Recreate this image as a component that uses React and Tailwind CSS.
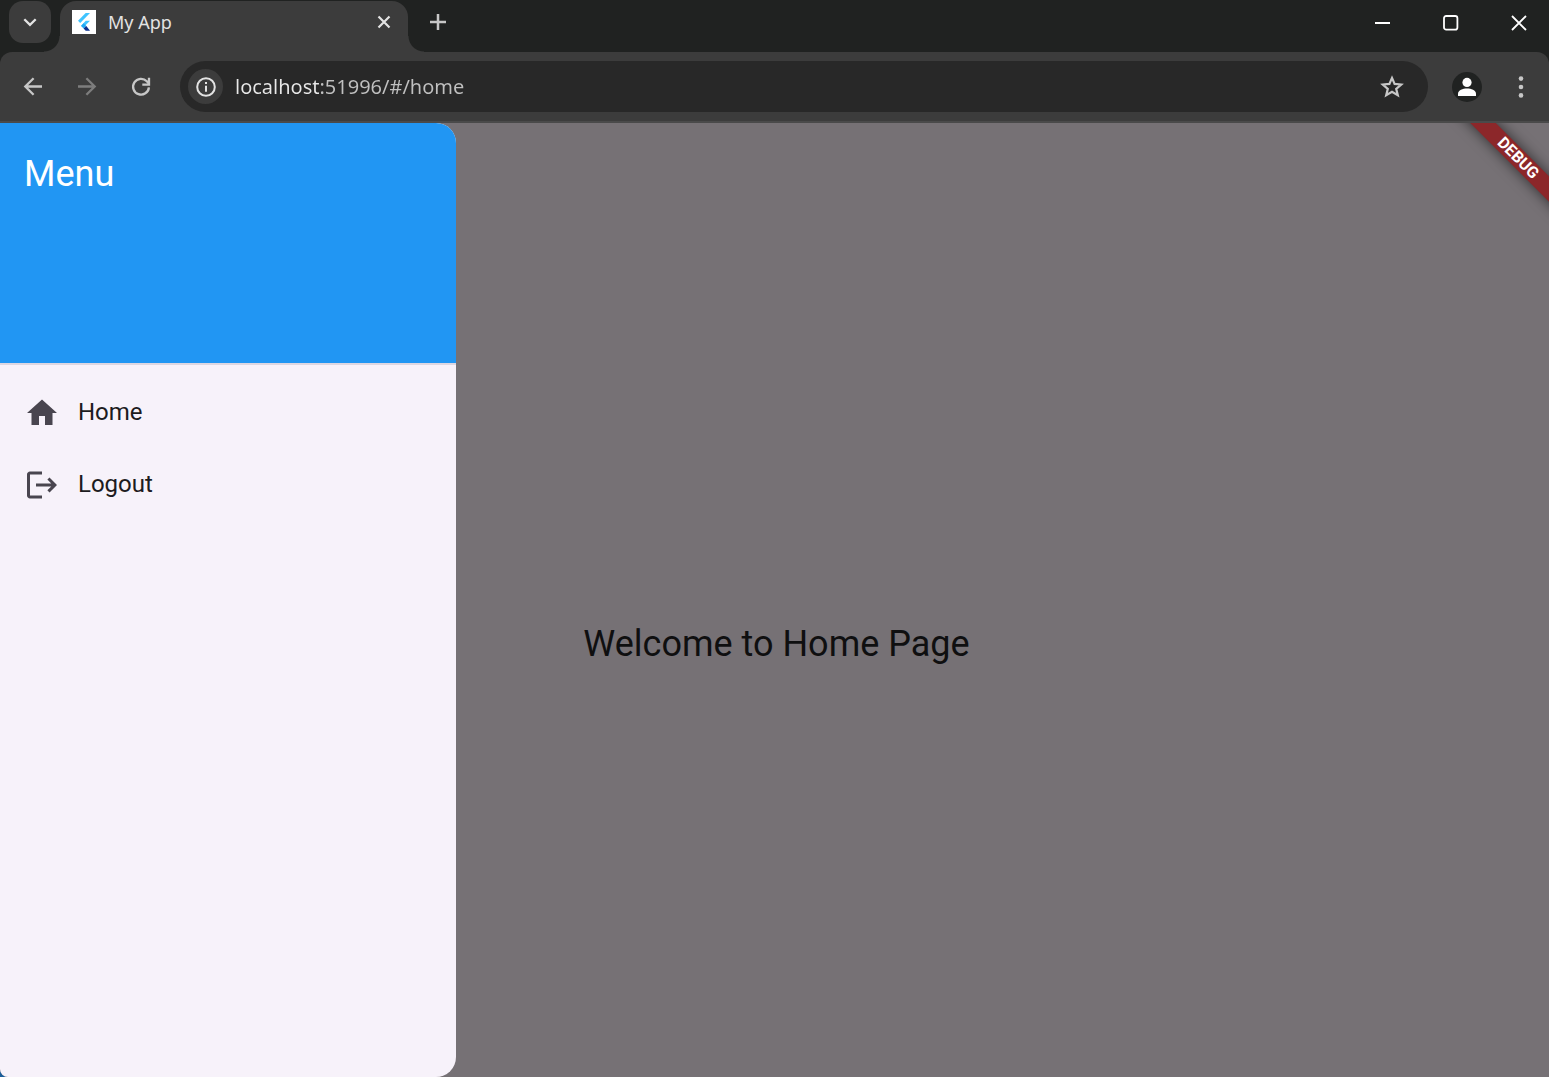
const iconButton = "flex shrink-0 items-center justify-center rounded-full";

function TabStrip() {
  return (
    <header className="flex h-13 items-start bg-[#202221] pl-[9px]">
      <button
        type="button"
        aria-label="Search tabs"
        className="mt-px flex h-[42px] w-[42px] shrink-0 items-center justify-center rounded-[14px] bg-[#3c3c3c]"
      >
        <svg width="16" height="16" viewBox="0 0 16 16" fill="none" stroke="#e3e3e3" strokeWidth="2.3">
          <path d="M2.3 5.2 8 10.8l5.7-5.6" />
        </svg>
      </button>
      <div className="relative mt-px ml-[9px] flex h-[51px] w-[348px] items-center rounded-t-2xl bg-[#3c3c3c] pr-4 pb-[9px] pl-3">
        <span className="absolute bottom-0 -left-4 h-4 w-4 bg-[radial-gradient(circle_at_0_0,transparent_15px,#3c3c3c_16px)]" />
        <span className="absolute -right-4 bottom-0 h-4 w-4 bg-[radial-gradient(circle_at_100%_0,transparent_15px,#3c3c3c_16px)]" />
        <svg width="24" height="24" viewBox="0 0 24 24" className="shrink-0">
          <path fill="#fff" d="M0 0h24v24H0z" />
          <path fill="#40c4ff" d="M13.7 3H18L8.2 13 6 10.8z" />
          <path fill="#40c4ff" d="M13.7 10.8H18L12.8 16 9 16z" />
          <path fill="#1fa8f5" d="m9 16 2.6-2.7 2.7 2.7-2.7 2.6z" />
          <path fill="#0a2f8f" d="m11.6 18.600 2.700-2.600 3.700 4.800h-4.300z" />
        </svg>
        <span className="ml-3 flex-1 font-['Noto_Sans','Open_Sans',sans-serif] text-lg leading-6 text-[#e3e3e3]">
          My App
        </span>
        <button type="button" aria-label="Close tab" className={`${iconButton} h-4 w-4`}>
          <svg width="14" height="14" viewBox="0 0 14 14" stroke="#e3e3e3" strokeWidth="2.2">
            <path d="m1.5 1.5 11 11M12.5 1.5l-11 11" />
          </svg>
        </button>
      </div>
      <button type="button" aria-label="New tab" className={`${iconButton} mt-1.5 ml-3.5 h-8 w-8`}>
        <svg width="16" height="16" viewBox="0 0 16 16" stroke="#c7c7c7" strokeWidth="2.5">
          <path d="M8 0v16M0 8h16" />
        </svg>
      </button>
      <div className="ml-auto flex h-[46px]">
        <button type="button" aria-label="Minimize" className="flex w-[68px] items-center justify-center">
          <svg width="16" height="16" viewBox="0 0 16 16" stroke="#fff" strokeWidth="2">
            <path d="M0 8h15" />
          </svg>
        </button>
        <button type="button" aria-label="Maximize" className="flex w-[68px] items-center justify-center">
          <svg width="16" height="16" viewBox="0 0 16 16" fill="none" stroke="#fff" strokeWidth="1.8">
            <rect x="1" y="1" width="13.4" height="13.6" rx="2.2" />
          </svg>
        </button>
        <button type="button" aria-label="Close window" className="flex w-[64px] items-center justify-center pl-1">
          <svg width="16" height="16" viewBox="0 0 16 16" stroke="#fff" strokeWidth="1.8">
            <path d="m1 1 14 14M15 1 1 15" />
          </svg>
        </button>
      </div>
    </header>
  );
}

function Toolbar() {
  return (
    <div className="bg-[#202221]">
      <div className="flex h-[71px] items-center rounded-t-xl border-b-2 border-[#4a4a4a] bg-[#3c3c3c] pr-[11px] pl-[15px]">
        <nav aria-label="Browser" className="flex gap-[18px]">
          <button type="button" aria-label="Back" className={`${iconButton} h-9 w-9`}>
            <svg width="20" height="20" viewBox="0 0 20 20" fill="none" stroke="#c7c7c7" strokeWidth="2.3">
              <path d="M19 9.500H2.400M10.600 1.200 2.300 9.500l8.300 8.300" />
            </svg>
          </button>
          <button type="button" aria-label="Forward" className={`${iconButton} h-9 w-9`}>
            <svg width="20" height="20" viewBox="0 0 20 20" fill="none" stroke="#7d7d7d" strokeWidth="2.3">
              <path d="M1 9.500h16.600M9.400 1.200l8.300 8.300-8.300 8.300" />
            </svg>
          </button>
          <button type="button" aria-label="Reload" className={`${iconButton} h-9 w-9`}>
            <svg width="20" height="20" viewBox="0 0 20 20" fill="none" stroke="#c7c7c7" strokeWidth="2.3">
              <path d="M17.900 10.300A7.900 7.900 0 1 1 15.800 4.300L18 6.600" />
              <path d="M18 .7v6.900h-6.700" />
            </svg>
          </button>
        </nav>
        <div className="ml-[21px] flex h-[51px] flex-1 items-center rounded-full bg-[#282828] pr-5 pl-2">
          <button type="button" aria-label="View site information" className={`${iconButton} h-[35px] w-[35px] bg-[#3c3c3c]`}>
            <svg width="20" height="20" viewBox="0 0 20 20" fill="none" stroke="#e3e3e3" strokeWidth="2">
              <circle cx="10" cy="10" r="8.8" />
              <path d="M10 8.8v6M10 5v2.1" />
            </svg>
          </button>
          <input
            type="text"
            aria-label="Address"
            defaultValue="localhost:51996/#/home"
            className="ml-3 min-w-0 flex-1 bg-[linear-gradient(90deg,#e8e8e8_84px,#c0c0c0_84px)] bg-clip-text font-['Noto_Sans','Open_Sans',sans-serif] text-xl leading-7 text-transparent outline-none"
          />
          <button type="button" aria-label="Bookmark this tab" className={`${iconButton} h-8 w-8`}>
            <svg width="24" height="24" viewBox="0 0 24 24" fill="none" stroke="#c7c7c7" strokeWidth="2.2">
              <path d="m12 2.900 2.600 6 6.600.6-5 4.300 1.600 6.500-5.800-3.500-5.800 3.500 1.600-6.500-5-4.300 6.600-.6z" />
            </svg>
          </button>
        </div>
        <button type="button" aria-label="Profile" className={`${iconButton} ml-6 h-[30px] w-[30px] bg-[#202221]`}>
          <svg width="20" height="20" viewBox="0 0 20 20" fill="#fff">
            <circle cx="10" cy="5.400" r="4.600" />
            <path d="M1 19v-2.200c0-3.400 4.800-5.200 9-5.200s9 1.800 9 5.200V19z" />
          </svg>
        </button>
        <button type="button" aria-label="Browser menu" className={`${iconButton} ml-[22px] h-9 w-[34px]`}>
          <svg width="6" height="22" viewBox="0 0 6 22" fill="#c7c7c7">
            <circle cx="3" cy="2.600" r="2.300" />
            <circle cx="3" cy="11" r="2.300" />
            <circle cx="3" cy="19.400" r="2.300" />
          </svg>
        </button>
      </div>
    </div>
  );
}

const menuItems = [
  { label: "Home", path: "M10 20v-6h4v6h5v-8h3L12 3 2 12h3v8z" },
  {
    label: "Logout",
    path: "M17 7l-1.410 1.410L18.170 11H8v2h10.170l-2.580 2.580L17 17l5-5zM4 5h8V3H4c-1.100 0-2 .9-2 2v14c0 1.100.9 2 2 2h8v-2H4V5z",
  },
];

function Drawer() {
  return (
    <aside className="z-10 w-[456px] shrink-0 overflow-hidden rounded-r-[20px] bg-[#f7f2fa]">
      <div className="h-[242px] border-b-2 border-[#ddd7e2] bg-[#2196f3] px-6 pt-6">
        <h2 className="text-4xl leading-[54px] text-white">Menu</h2>
      </div>
      <nav aria-label="Menu" className="pt-3">
        {menuItems.map((item) => (
          <a key={item.label} href={`#/${item.label.toLowerCase()}`} className="flex h-18 items-center gap-[18px] px-6">
            <svg width="36" height="36" viewBox="0 0 24 24" fill="#49454f" className="shrink-0">
              <path d={item.path} />
            </svg>
            <span className="pb-0.5 text-2xl leading-9 text-[#1d1b20]">{item.label}</span>
          </a>
        ))}
      </nav>
    </aside>
  );
}

export default function App() {
  return (
    <div className="bg-[#1b5e9a]">
      <div className="flex min-h-screen flex-col overflow-hidden rounded-bl-lg bg-[#767175] font-['Roboto',sans-serif]">
        <TabStrip />
        <Toolbar />
        <div className="relative grid flex-1 overflow-hidden">
          <main className="col-start-1 row-start-1 flex items-center justify-center pt-22 pl-1">
            <h1 className="text-4xl text-[#0f0f10]">Welcome to Home Page</h1>
          </main>
          <div className="z-10 col-start-1 row-start-1 flex">
            <Drawer />
          </div>
          <div className="absolute top-[26px] -right-[49px] flex h-[18px] w-40 rotate-45 items-center justify-center bg-[#8c272a] text-base leading-[18px] font-bold text-white shadow-[0_0_14px_rgba(0,0,0,0.6)]">
            DEBUG
          </div>
        </div>
      </div>
    </div>
  );
}
